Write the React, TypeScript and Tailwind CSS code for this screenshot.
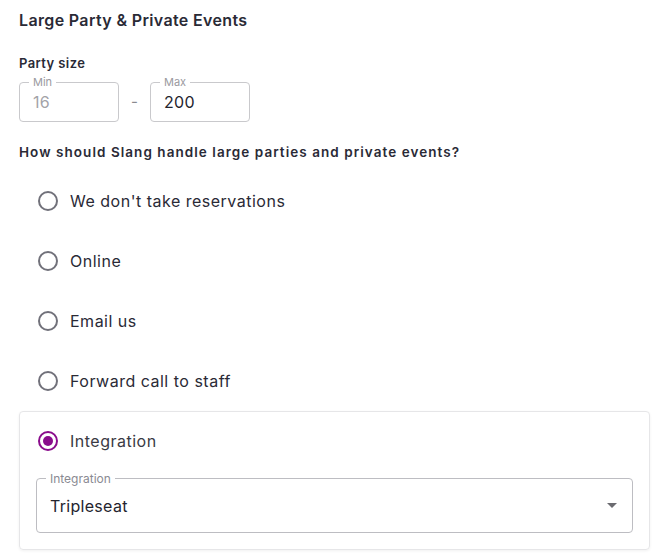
import React from 'react';

const font = { fontFamily: 'Inter, "Liberation Sans", sans-serif' };

const options = [
  { id: 'none', label: "We don't take reservations" },
  { id: 'online', label: 'Online' },
  { id: 'email', label: 'Email us' },
  { id: 'forward', label: 'Forward call to staff' },
];

const Radio = ({ checked }: { checked?: boolean }) => (
  <span
    className={
      checked
        ? 'flex h-5 w-5 shrink-0 items-center justify-center rounded-full border-2 border-[#8a0c8c]'
        : 'flex h-5 w-5 shrink-0 items-center justify-center rounded-full border-2 border-[#71717a]'
    }
  >
    {checked && <span className="h-[10px] w-[10px] rounded-full bg-[#8a0c8c]" />}
  </span>
);

const OutlinedBox = ({
  label,
  value,
  disabled,
}: {
  label: string;
  value: string;
  disabled?: boolean;
}) => (
  <div className="relative flex h-10 w-[100px] items-center rounded-[4px] border border-[#c9c9cc] pl-[13px]">
    <span className="absolute -top-[7px] left-[9px] bg-white px-[4px] text-[11px] leading-[12px] text-[#9a9aa0]">
      {label}
    </span>
    <span
      className={
        disabled
          ? 'text-[16px] tracking-[0.3px] text-[#a3a3a8]'
          : 'text-[16px] tracking-[0.3px] text-[#24242e]'
      }
    >
      {value}
    </span>
  </div>
);

export default function App() {
  return (
    <div className="min-h-[560px] bg-white pl-[19px] pr-[15px] pt-[12px] text-[#2a2a36]" style={font}>
      <h2 className="text-[16px] font-semibold leading-[16px] tracking-[0.35px]">
        Large Party &amp; Private Events
      </h2>

      <div className="mt-[27px] text-[13px] font-semibold leading-[16px] tracking-[0.4px]">Party size</div>
      <div className="mt-[11px] flex items-center">
        <OutlinedBox label="Min" value="16" disabled />
        <span className="w-[31px] text-center text-[15px] text-[#8a8a90]">-</span>
        <OutlinedBox label="Max" value="200" />
      </div>

      <div className="mt-[22px] text-[13.5px] font-semibold leading-[16px] tracking-[1.05px]">
        How should Slang handle large parties and private events?
      </div>

      <div className="mt-[11px] flex flex-col">
        {options.map((o) => (
          <label key={o.id} className="flex h-[60px] items-center gap-[12px] pl-[19px]">
            <Radio />
            <span className="text-[16px] tracking-[0.5px]">{o.label}</span>
          </label>
        ))}
      </div>

      <div className="rounded-[4px] border border-[#e6e6e8] px-4 pb-[16px] shadow-[0_1px_3px_rgba(0,0,0,0.06)]">
        <label className="flex h-[58px] items-center gap-[12px] pl-[2px]">
          <Radio checked />
          <span className="text-[16px] tracking-[0.5px] text-[#3a3a44]">Integration</span>
        </label>
        <div className="relative mt-[8px] flex h-[55px] items-center justify-between rounded-[4px] border border-[#bdbdc2] pl-[13px] pr-[15px]">
          <span className="absolute -top-[7px] left-[9px] bg-white px-[4px] text-[12px] leading-[13px] text-[#8a8a92]">
            Integration
          </span>
          <span className="text-[16px] tracking-[0.3px] text-[#24242e]">Tripleseat</span>
          <svg width="10" height="5" viewBox="0 0 10 5" className="fill-[#6b6b70]">
            <path d="M0 0h10L5 5z" />
          </svg>
        </div>
      </div>
    </div>
  );
}
